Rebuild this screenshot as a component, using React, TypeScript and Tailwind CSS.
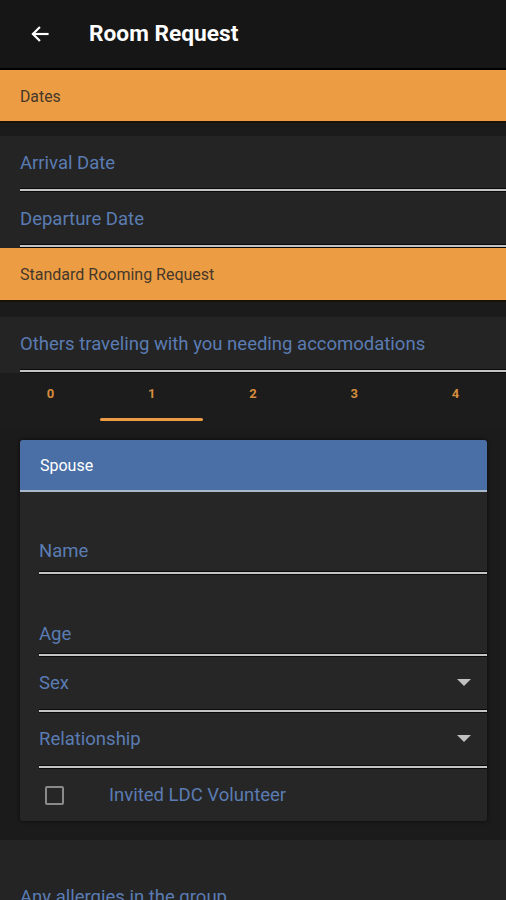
import React from "react";

function Line() {
  return <div className="h-[4px] bg-[#c4c4c4] border-y border-[#0a0a0a]" />;
}

function Arrow() {
  return (
    <svg width="14" height="8" viewBox="0 0 14 8">
      <path d="M0 0 L14 0 L7 7 Z" fill="#c0c0c0" />
    </svg>
  );
}

const label = "text-[18.5px] leading-[22px] text-[#5b7cb3]";

export default function App() {
  return (
    <div
      className="w-[506px] h-[900px] overflow-hidden bg-[#1b1b1b]"
      style={{ fontFamily: "Roboto, 'Noto Sans', sans-serif" }}
    >
      {/* header */}
      <div className="h-[70px] bg-[#161616] flex items-center border-b-2 border-black">
        <svg className="ml-[30px]" width="20" height="20" viewBox="0 0 24 24" fill="none" stroke="#ffffff" strokeWidth="2.6" strokeLinecap="square">
          <path d="M21 12H4" />
          <path d="M11 4.5L3.5 12L11 19.5" />
        </svg>
        <span className="ml-[39px] text-[22.7px] font-bold text-white">Room Request</span>
      </div>

      {/* Dates */}
      <div className="h-[53px] bg-[#ec9c43] border-b-2 border-[#1a1108] flex items-center pl-[20px] pt-[2px]">
        <span className="text-[15.8px] text-[#45382a]">Dates</span>
      </div>
      <div className="h-[13px] bg-[#1b1b1b]" />

      <div className="bg-[#242424] pl-[20px]">
        <div className="h-[52px] flex items-center pt-[2px]">
          <span className={label}>Arrival Date</span>
        </div>
        <Line />
        <div className="h-[52px] flex items-center pt-[2px]">
          <span className={label}>Departure Date</span>
        </div>
        <Line />
      </div>

      {/* Standard Rooming Request */}
      <div className="h-[54px] bg-[#ec9c43] border-b-2 border-[#1a1108] flex items-center pl-[20px] pt-[2px]">
        <span className="text-[16px] text-[#45382a]">Standard Rooming Request</span>
      </div>
      <div className="h-[15px] bg-[#1b1b1b]" />

      <div className="bg-[#242424] pl-[20px]">
        <div className="h-[52px] flex items-center pt-[1px]">
          <span className={label}>Others traveling with you needing accomodations</span>
        </div>
        <Line />
      </div>

      {/* tabs */}
      <div className="h-[54px] grid grid-cols-5 bg-[#1c1c1c]">
        {["0", "1", "2", "3", "4"].map((t) => (
          <div key={t} className="flex flex-col items-center">
            <span className="mt-[12px] text-[13px] leading-[18px] font-bold text-[#d48c3c]">{t}</span>
            {t === "1" && <div className="mt-[15px] h-[3px] w-[103px] rounded-full bg-[#ec9c43]" />}
          </div>
        ))}
      </div>

      {/* card */}
      <div className="pl-[20px] pr-[19px] pt-[13px] pb-[19px]">
        <div className="rounded-[3px] overflow-hidden bg-[#262626] shadow-[0_0_4px_rgba(0,0,0,0.6)]">
          <div className="h-[52px] bg-[#4a6fa6] border-b-2 border-[#aab8cc] flex items-center pl-[20px] pt-[2px]">
            <span className="text-[16px] text-white">Spouse</span>
          </div>
          <div className="pl-[19px]">
            <div className="h-[79px] flex items-end pb-[9px]">
              <span className={label}>Name</span>
            </div>
            <Line />
            <div className="h-[78px] flex items-end pb-[8px]">
              <span className={label}>Age</span>
            </div>
            <Line />
            <div className="h-[52px] flex items-center justify-between pr-[16px]">
              <span className={label}>Sex</span>
              <Arrow />
            </div>
            <Line />
            <div className="h-[52px] flex items-center justify-between pr-[16px]">
              <span className={label}>Relationship</span>
              <Arrow />
            </div>
            <Line />
            <div className="h-[52px] flex items-center">
              <div className="ml-[6px] w-[19px] h-[19px] rounded-[2px] border-2 border-[#8a8a8a]" />
              <span className={`ml-[45px] ${label}`}>Invited LDC Volunteer</span>
            </div>
          </div>
        </div>
      </div>

      <div className="bg-[#242424] h-[100px] pl-[20px] pt-[46px]">
        <span className={label}>Any allergies in the group</span>
      </div>
    </div>
  );
}
